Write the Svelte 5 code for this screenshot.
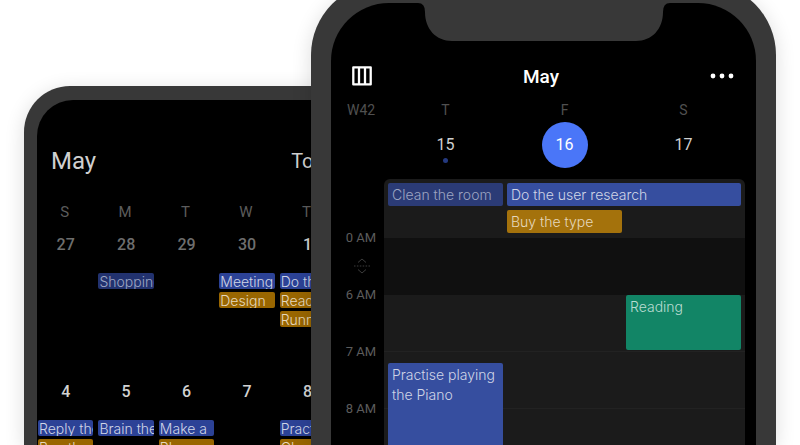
<script>
  const HOUR = 57;
  const FIRST_HOUR = 6;

  const weekdays = ['S', 'M', 'T', 'W', 'T', 'F', 'S'];

  const weeks = [
    [
      { date: 27, muted: true, events: [] },
      { date: 28, muted: true, events: [{ title: 'Shopping', color: 'faded' }] },
      { date: 29, muted: true, events: [] },
      {
        date: 30,
        muted: true,
        events: [{ title: 'Meeting', color: 'blue' }, { title: 'Design', color: 'amber' }]
      },
      {
        date: 1,
        events: [
          { title: 'Do the user research', color: 'blue' },
          { title: 'Reading', color: 'amber' },
          { title: 'Running', color: 'amber' }
        ]
      },
      { date: 2, events: [] },
      { date: 3, events: [] }
    ],
    [
      {
        date: 4,
        events: [{ title: 'Reply the email', color: 'blue' }, { title: 'Buy the type', color: 'amber' }]
      },
      { date: 5, events: [{ title: 'Brain the storm', color: 'blue' }] },
      {
        date: 6,
        events: [{ title: 'Make a', color: 'blue' }, { title: 'Phone mom', color: 'amber' }]
      },
      { date: 7, events: [] },
      {
        date: 8,
        events: [{ title: 'Practise', color: 'blue' }, { title: 'Clean', color: 'amber' }]
      },
      { date: 9, events: [] },
      { date: 10, events: [] }
    ]
  ];

  const days = [
    { name: 'T', date: 15, dot: true, events: [{ title: 'Practise playing the Piano', color: 'blue', start: 7.2, length: 2 }] },
    { name: 'F', date: 16, today: true, events: [] },
    { name: 'S', date: 17, events: [{ title: 'Reading', color: 'green', start: 6, length: 0.97 }] }
  ];

  const allDay = [
    { title: 'Clean the room', color: 'faded', column: '1' },
    { title: 'Do the user research', color: 'blue', column: '2 / 4' },
    { title: 'Buy the type', color: 'amber', column: '2' }
  ];

  const hours = [6, 7, 8, 9];

  const px = (n) => Math.round(n * HOUR) + 'px';
</script>

<main class="stage">
  <section class="phone back">
    <div class="screen">
      <header class="month-bar">
        <h2>May</h2>
        <button type="button">Today</button>
      </header>
      <div class="month-row names">
        {#each weekdays as name}
          <span>{name}</span>
        {/each}
      </div>
      {#each weeks as week}
        <div class="month-row week">
          {#each week as day}
            <div class="cell">
              <span class="date" class:muted={day.muted}>{day.date}</span>
              {#each day.events as event}
                <div class="chip {event.color}">{event.title}</div>
              {/each}
            </div>
          {/each}
        </div>
      {/each}
    </div>
  </section>

  <section class="phone front">
    <div class="screen">
      <svg class="notch" width="252" height="38" viewBox="0 0 252 38" aria-hidden="true">
        <path d="M0 0Q7 0 7 9C7 26 18 38 34 38H218C234 38 245 26 245 9Q245 0 252 0Z" fill="#383838" />
      </svg>
      <header class="top-bar">
        <button type="button" aria-label="Change view">
          <svg width="20" height="20" viewBox="0 0 20 20">
            <path
              d="M1.3 1.3H18.7V18.4H1.3ZM7 1V18.5M13 1V18.5"
              fill="none"
              stroke="#fff"
              stroke-width="2.3"
              stroke-linejoin="round"
            />
          </svg>
        </button>
        <h1>May</h1>
        <button type="button" aria-label="More">
          <svg width="24" height="20" viewBox="0 0 24 20" fill="#fff">
            <circle cx="3" cy="10" r="2.4" />
            <circle cx="12" cy="10" r="2.4" />
            <circle cx="21" cy="10" r="2.4" />
          </svg>
        </button>
      </header>

      <div class="day-bar">
        <span class="week-no">W42</span>
        <div class="days">
          {#each days as day}
            <div class="day">
              <span class="name">{day.name}</span>
              <span class="number" class:today={day.today}>{day.date}</span>
              {#if day.dot}<i class="dot"></i>{/if}
            </div>
          {/each}
        </div>
      </div>

      <div class="agenda">
        <div class="axis">
          <span>0 AM</span>
          <button type="button" class="expand" aria-label="Expand hours">
            <svg width="16" height="20" viewBox="0 0 16 20" fill="none" stroke="#3c3c3c">
              <path d="M4 6.5L8 3L12 6.5M4 13.5L8 17L12 13.5" />
              <path d="M0 10H16" stroke-width="1.2" stroke-dasharray="1.5 1.4" />
            </svg>
          </button>
          {#each hours as hour}
            <span>{hour} AM</span>
          {/each}
        </div>
        <div class="board">
          <div class="all-day">
            {#each allDay as event}
              <div class="event {event.color}" style="grid-column: {event.column}">{event.title}</div>
            {/each}
          </div>
          <div class="collapsed"></div>
          <div class="timed">
            {#each days as day}
              <div class="lane">
                {#each day.events as event}
                  <div
                    class="event {event.color}"
                    style="margin-top: {px(event.start - FIRST_HOUR)}; height: {px(event.length)}"
                  >
                    {event.title}
                  </div>
                {/each}
              </div>
            {/each}
          </div>
        </div>
      </div>
    </div>
  </section>
</main>

<style>
  :global(body) {
    margin: 0;
    background: #fff;
  }

  .stage {
    display: grid;
    grid-template-columns: 24fr 287fr 161fr 304fr 24fr;
    grid-template-rows: minmax(0, 1fr);
    height: 100vh;
    overflow: hidden;
    font-family: Roboto, 'Liberation Sans', sans-serif;
  }

  .phone {
    display: flex;
    grid-row: 1;
    min-width: 0;
    box-sizing: border-box;
    background: #383838;
    box-shadow: 0 4px 20px rgba(0, 0, 0, 0.14);
  }

  .back {
    grid-column: 2 / 4;
    margin-top: 86px;
    padding: 14px 13px 0;
    border-radius: 46px 46px 0 0;
  }

  .front {
    z-index: 1;
    grid-column: 3 / 5;
    margin-top: -17px;
    padding: 20px 20px 0;
    border-radius: 72px 72px 0 0;
  }

  .screen {
    flex: 1;
    min-width: 0;
    overflow: hidden;
    background: #000;
  }

  .back .screen {
    border-radius: 36px 36px 0 0;
  }

  .front .screen {
    border-radius: 58px 58px 0 0;
  }

  button {
    padding: 0;
    border: 0;
    background: none;
    color: inherit;
    font: inherit;
    cursor: pointer;
  }

  svg {
    display: block;
  }

  h1,
  h2 {
    margin: 0;
    font-weight: 400;
  }

  .faded {
    background: #22326f;
    color: #9da5c2;
  }

  .blue {
    background: #2c4296;
    color: #d0d5e6;
  }

  .amber {
    background: #996600;
    color: #e6d8bd;
  }

  .green {
    background: #128566;
    color: #b9dcd2;
  }

  /* month view */
  .month-bar {
    display: flex;
    align-items: center;
    justify-content: space-between;
    height: 40px;
    padding: 41px 114px 0 14px;
    color: #d0d0d0;
  }

  .month-bar h2 {
    font-size: 24px;
  }

  .month-bar button {
    font-size: 20px;
  }

  .month-row {
    display: grid;
    grid-template-columns: repeat(7, minmax(0, 1fr));
    column-gap: 5px;
    padding: 0 3px 0 1px;
  }

  .names {
    padding-top: 21px;
    color: #5c5c5c;
    font-size: 15px;
    line-height: 20px;
    text-align: center;
  }

  .names span {
    padding-right: 2px;
  }

  .week {
    height: 147px;
  }

  .names + .week {
    margin-top: 13px;
  }

  .cell {
    display: flex;
    flex-direction: column;
    gap: 3px;
  }

  .date {
    margin-bottom: 15px;
    color: #d2d2d2;
    font-size: 16px;
    font-weight: 500;
    line-height: 20px;
    text-align: center;
  }

  .muted {
    color: #6e6e6e;
  }

  .chip {
    height: 16px;
    padding-left: 1px;
    border-radius: 2px;
    overflow: hidden;
    font-family: Inter, sans-serif;
    font-size: 14px;
    font-weight: 300;
    line-height: 17px;
    white-space: nowrap;
  }

  /* three day view */
  .notch {
    margin: 0 auto;
  }

  .top-bar {
    display: flex;
    align-items: center;
    justify-content: space-between;
    height: 30px;
    padding: 20px 22px 0 21px;
    color: #fff;
  }

  .top-bar h1 {
    font-size: 19px;
    font-weight: 500;
  }

  .day-bar {
    display: flex;
    height: 79px;
    padding: 9px 11px 0 0;
    color: #505050;
    font-size: 14px;
    line-height: 20px;
  }

  .week-no {
    width: 53px;
    box-sizing: border-box;
    padding-left: 16px;
  }

  .days {
    display: grid;
    flex: 1;
    grid-template-columns: repeat(3, minmax(0, 1fr));
    padding: 0 2px;
  }

  .day {
    position: relative;
    display: flex;
    flex-direction: column;
    align-items: center;
    gap: 2px;
  }

  .number {
    width: 46px;
    border-radius: 50%;
    color: #d0d0d0;
    font-size: 16px;
    line-height: 46px;
    text-align: center;
  }

  .today {
    background: #4a76f8;
    color: #fff;
  }

  .dot {
    position: absolute;
    top: 58px;
    width: 5px;
    height: 5px;
    border-radius: 50%;
    background: #24397f;
  }

  .agenda {
    display: flex;
    padding-right: 11px;
  }

  .axis {
    display: flex;
    flex-direction: column;
    align-items: flex-end;
    gap: 37px;
    width: 53px;
    box-sizing: border-box;
    padding: 49px 8px 0 0;
    color: #5c5c5c;
    font-size: 13px;
    line-height: 20px;
  }

  .expand {
    margin: -29px 6px -28px 0;
  }

  .board {
    flex: 1;
    min-width: 0;
    border-radius: 6px 6px 0 0;
    overflow: hidden;
    background: #1b1b1b;
  }

  .all-day,
  .timed {
    display: grid;
    grid-template-columns: repeat(3, minmax(0, 1fr));
    column-gap: 4px;
    padding: 0 4px;
  }

  .all-day {
    row-gap: 4px;
    height: 55px;
    grid-auto-rows: 23px;
    padding-top: 4px;
  }

  .collapsed {
    height: 57px;
    background: #101010;
  }

  .timed {
    height: 228px;
    background: repeating-linear-gradient(#1b1b1b 0 56px, #222 56px 57px);
  }

  .event {
    box-sizing: border-box;
    padding: 2px 4px;
    border-radius: 2px;
    overflow: hidden;
    font-family: Inter, sans-serif;
    font-size: 14px;
    font-weight: 300;
    line-height: 20px;
  }

  .board .blue {
    background: #364e9f;
  }

  .board .faded {
    background: #2b3b76;
  }

  .board .amber {
    background: #a4720c;
  }
</style>
